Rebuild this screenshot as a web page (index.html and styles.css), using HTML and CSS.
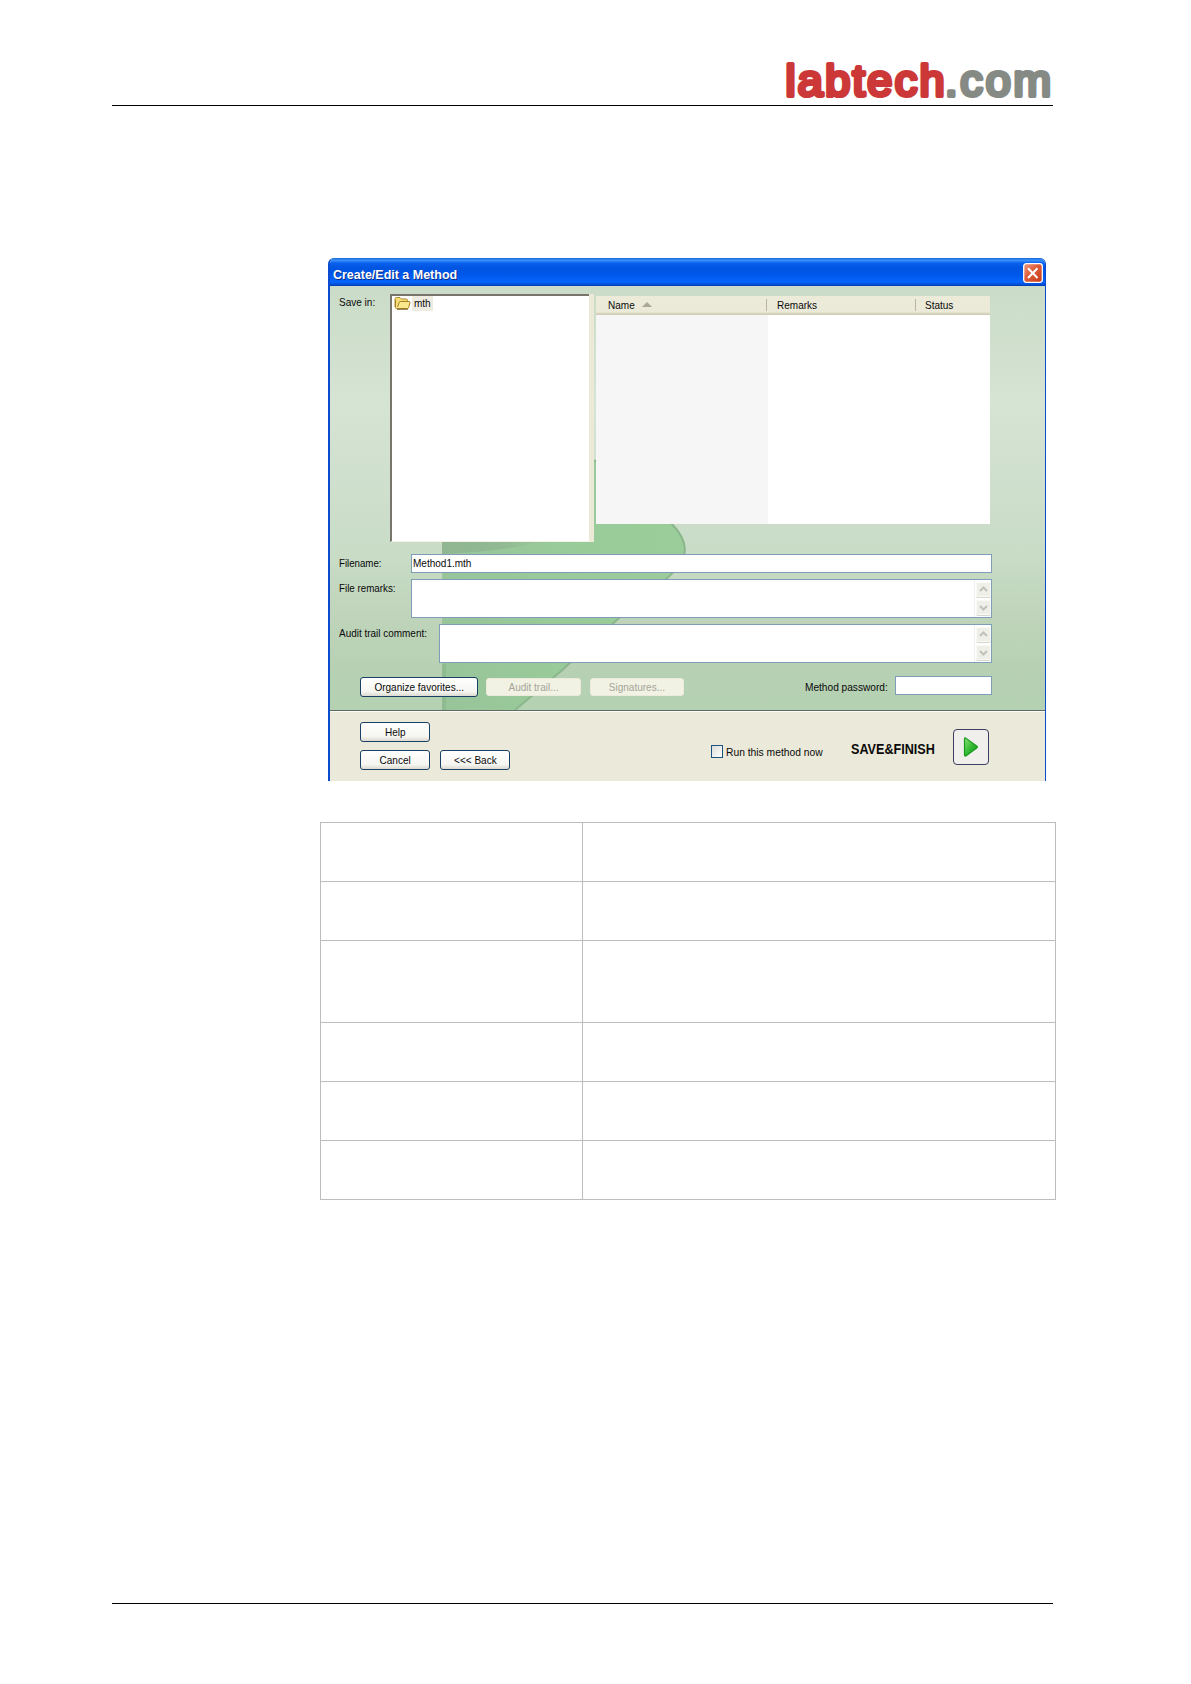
FILE: index.html
```html
<!DOCTYPE html>
<html lang="en">
<head>
<meta charset="utf-8">
<title>Create/Edit a Method</title>
<link rel="stylesheet" href="styles.css">
</head>
<body>
<div class="page">
  <header class="page-header">
    <svg class="logo" width="274" height="50" viewBox="0 0 274 50">
      <text class="logo-red" x="6.5" y="40" textLength="159" lengthAdjust="spacing">labtech</text>
      <text class="logo-gray" x="166" y="40" textLength="106" lengthAdjust="spacing">.com</text>
    </svg>
  </header>
  <main class="content">
    <section class="dialog">
      <div class="titlebar">
        <span class="title t">Create/Edit a Method</span>
        <svg class="close" width="20" height="20" viewBox="0 0 20 20">
          <defs><linearGradient id="red" x1="0" y1="0" x2="1" y2="1"><stop offset="0" stop-color="#f09a80"/><stop offset=".45" stop-color="#de5a38"/><stop offset="1" stop-color="#c43c18"/></linearGradient></defs>
          <rect x=".7" y=".7" width="18.6" height="18.6" rx="2.5" fill="url(#red)" stroke="#fff" stroke-width="1.3"/>
          <path d="M5 5.3L14.5 15M14.5 5.3L5 15" stroke="#fff" stroke-width="2"/>
        </svg>
      </div>
      <div class="body">
        <svg class="leaf" width="715" height="424" viewBox="0 0 715 424">
          <defs>
            <linearGradient id="leafFill" x1="0" y1="0" x2="1" y2="0"><stop offset="0" stop-color="#98c49a"/><stop offset=".45" stop-color="#99ca99"/><stop offset="1" stop-color="#9bcd9b"/></linearGradient>
            <linearGradient id="smudge" x1="0" y1="0" x2="1" y2="0"><stop offset="0" stop-color="#8cb08e" stop-opacity=".7"/><stop offset=".6" stop-color="#8cb08e" stop-opacity=".6"/><stop offset="1" stop-color="#8cb08e" stop-opacity="0"/></linearGradient>
          </defs>
          <path d="M112 120C200 120 240 160 264 174C310 205 332 228 342 238C361 258 359 274 335 294C315 312 300 322 289 332L230 386L185 424H112Z" fill="url(#leafFill)"/>
          <path d="M264 174C310 205 332 228 342 238C361 258 359 274 335 294C315 312 300 322 289 332L230 386L185 424" fill="none" stroke="#8ab68c" stroke-width="2"/>
          <path d="M112 256H212Q170 266 112 268Z" fill="url(#smudge)"/>
          <path d="M114 378V424" stroke="#8ebb90" stroke-width="4"/>
        </svg>
        <div class="browser">
          <span class="t lbl save-in">Save in:</span>
          <div class="tree">
            <svg width="17" height="14" viewBox="0 0 17 14">
              <path d="M1 11V3Q1 1.5 2.5 1.5H6L7.5 3H12.5Q13.5 3 13.5 4.5V6" fill="#f5dc79" stroke="#b08a2c"/>
              <path d="M1.5 4V11.5Q1.5 12.5 2.5 12.5H13.5Q14.3 12.5 14.6 11.6L16 6.5Q16 5.5 15 5.5H6.5Q5.5 5.5 5.2 6.5L3.5 11" fill="#fce88c" stroke="#a57e22"/>
              <path d="M3 13.4H14" stroke="#6f5b25" stroke-width=".8"/>
            </svg>
            <span class="node"><span class="t">mth</span></span>
          </div>
          <div class="edge"></div>
          <div class="list">
            <div class="list-head">
              <div class="col name"><span class="t">Name</span><svg width="10" height="5" viewBox="0 0 10 5"><path d="M0 5L5 0L10 5Z" fill="#aca899"/></svg></div>
              <div class="col remarks"><span class="t">Remarks</span></div>
              <div class="col status"><span class="t">Status</span></div>
            </div>
            <div class="list-body"></div>
          </div>
        </div>
        <div class="field filename"><label class="t lbl">Filename:</label><div class="input"><span class="t">Method1.mth</span></div></div>
        <div class="field area"><label class="t lbl">File remarks:</label>
          <div class="input"><div class="scroll"><svg width="15" height="15" viewBox="0 0 15 15"><path d="M4 9L7.5 5.5L11 9"/></svg><svg width="15" height="15" viewBox="0 0 15 15"><path d="M4 6L7.5 9.5L11 6"/></svg></div></div>
        </div>
        <div class="field area audit"><label class="t lbl">Audit trail comment:</label>
          <div class="input"><div class="scroll"><svg width="15" height="15" viewBox="0 0 15 15"><path d="M4 9L7.5 5.5L11 9"/></svg><svg width="15" height="15" viewBox="0 0 15 15"><path d="M4 6L7.5 9.5L11 6"/></svg></div></div>
        </div>
        <div class="actions">
          <div class="btn wide"><span class="t">Organize favorites...</span></div>
          <div class="btn off first"><span class="t">Audit trail...</span></div>
          <div class="btn off"><span class="t">Signatures...</span></div>
          <span class="t password">Method password:</span>
          <div class="input pw"></div>
        </div>
      </div>
      <div class="footer">
        <div class="nav">
          <div class="btn"><span class="t">Help</span></div>
          <div class="nav-row"><div class="btn"><span class="t">Cancel</span></div><div class="btn"><span class="t">&lt;&lt;&lt; Back</span></div></div>
        </div>
        <div class="run"><i class="check"></i><span class="t">Run this method now</span></div>
        <span class="t finish">SAVE&amp;FINISH</span>
        <div class="play">
          <svg width="16" height="20" viewBox="0 0 16 20">
            <defs><linearGradient id="green" x1="0" y1="0" x2="1" y2="1"><stop offset="0" stop-color="#8be07a"/><stop offset=".5" stop-color="#35bb35"/><stop offset="1" stop-color="#0d8f12"/></linearGradient></defs>
            <path d="M1.5 1.5Q2 .3 3.2 1.4L14 9.2Q14.8 10 14 10.8L3.2 18.8Q1.7 19.6 1.5 18Z" fill="url(#green)" stroke="#179a1c" stroke-width="1.2"/>
          </svg>
        </div>
      </div>
    </section>
    <table class="grid">
      <tr><td></td><td></td></tr>
      <tr><td></td><td></td></tr>
      <tr class="tall"><td></td><td></td></tr>
      <tr><td></td><td></td></tr>
      <tr><td></td><td></td></tr>
      <tr><td></td><td></td></tr>
    </table>
  </main>
  <footer class="page-footer"></footer>
</div>
</body>
</html>
```
FILE: styles.css
```css
* { box-sizing: border-box; }
body { margin: 0; background: #fff; font: 11px/14px "Liberation Sans", Arial, sans-serif; color: #0a0a0a; }
.page { width: 1191px; height: 1684px; display: flex; flex-direction: column; padding: 0 138px 80px 112px; }
.page-header { height: 106px; border-bottom: 1px solid #000; display: flex; justify-content: flex-end; align-items: flex-end; }
.logo { display: block; margin-bottom: -1px; overflow: visible; }
.logo text { font-family: "Liberation Sans", Arial, sans-serif; font-size: 45px; stroke-width: 4.2px; stroke-linejoin: round; stroke-linecap: round; }
.logo .logo-red { fill: #cb3837; stroke: #cb3837; }
.logo .logo-gray { fill: #868a85; stroke: #868a85; }
.content { flex: 1; padding: 152px 0 0 208px; }
.page-footer { border-top: 1px solid #000; }
.t { display: inline-block; white-space: nowrap; transform: scaleX(.91); transform-origin: left center; }

.dialog { width: 718px; height: 523px; margin-left: 8px; border-radius: 6px 6px 0 0; border: solid #0b4bd0; border-width: 0 1px 0 2px; display: flex; flex-direction: column; overflow: hidden; background: #ece9d8; }
.titlebar { height: 28px; margin: 0 -1px 0 -2px; padding: 2px 4px 0 6px; display: flex; align-items: center; justify-content: space-between; background: linear-gradient(#1565d8 0, #3b93fb 8%, #0a60ee 18%, #0054e0 35%, #0057ea 60%, #0465fc 85%, #0250d8 94%, #0038b0 100%); }
.title { color: #fff; font-size: 13px; font-weight: bold; transform: scaleX(.96); margin: 3px 0 0 -1px; text-shadow: 1px 1px 0 #0a2f8a; }
.close { display: block; margin-right: -1px; }

.body { position: relative; height: 425px; border-bottom: 1px solid #5f6b60; background: linear-gradient(#cadcc8 0, #d6e4d3 27%, #d0e0ce 45%, #c8dcc6 64%, #bfd4ba 78%, #b6d0b3 92%, #b4d2b2 100%); }
.leaf { position: absolute; left: 0; top: 0; }
.browser, .field, .actions { position: relative; }
.browser { display: flex; height: 268px; padding: 8px 0 0 9px; }
.lbl { flex: none; }
.save-in { width: 51px; margin: 1px 0 0; height: 14px; }
.tree { width: 199px; height: 248px; background: #fff; border: solid #77756c; border-width: 2px 0 0 2px; border-bottom: 1px solid #f4f3ea; padding: 0 0 0 2px; display: flex; }
.edge { width: 5px; height: 248px; background: #ece9d8; }
.node { background: #eeece2; height: 15px; width: 21px; margin-left: 1px; padding-left: 2px; line-height: 14px; }
.list { margin: 2px 0 0 2px; width: 394px; height: 228px; }
.list-head { display: flex; height: 19px; background: linear-gradient(#ecead9 0, #ebe9d8 84%, #d4d0ba 94%, #cdc9b2 100%); }
.col { height: 12px; margin-top: 3px; line-height: 12px; border-right: 1px solid #b9b5a2; }
.col.name { width: 171px; padding-left: 12px; display: flex; gap: 5px; }
.col.name svg { margin: 3px 0 0 0; }
.col.remarks { width: 149px; padding-left: 10px; }
.col.status { padding-left: 9px; border: 0; }
.list-body { height: 209px; background: linear-gradient(90deg, #f6f6f6 172px, #fff 172px); }

.field { display: flex; padding-left: 9px; }
.field .lbl { width: 72px; margin-top: 2px; height: 14px; }
.filename .lbl { transform: scaleX(.88); }
.input { width: 581px; height: 19px; background: #fff; border: 1px solid #7f9db9; }
.filename .input { padding: 1px 0 0 1px; }
.area { margin-top: 6px; }
.area .input { height: 39px; display: flex; justify-content: flex-end; }
.area .lbl { transform: scaleX(.89); }
.audit .lbl { width: 100px; transform: scaleX(.905); }
.audit .input { width: 553px; }
.scroll { width: 17px; padding: 2px 1px; display: flex; flex-direction: column; justify-content: space-between; border-left: 1px solid #f0efe9; }
.scroll svg { background: #efefe9; border-radius: 2px; box-shadow: inset 0 0 0 1px #f9f9f5, 0 1px 0 #d8d7cd; fill: none; stroke: #c2c1b8; stroke-width: 2; }

.actions { display: flex; margin-top: 13px; padding-left: 30px; }
.btn { width: 70px; height: 20px; border: 1px solid #1b4066; border-radius: 3px; background: linear-gradient(#fff, #f5f5f1 75%, #dcdad0); text-align: center; line-height: 18px; }
.btn .t { transform-origin: center; }
.btn.wide { width: 118px; margin-top: 1px; }
.btn.off { width: 94px; height: 18px; margin: 2px 0 0 9px; border-color: #eceadb; background: #f1f1e4; color: #a5a597; line-height: 16px; }
.btn.off.first { margin-left: 8px; width: 95px; }
.password { margin: 4px 0 0 121px; width: 90px; height: 14px; transform: scaleX(.92); }
.input.pw { width: 97px; }

.footer { flex: 1; border-top: 1px solid #fbfaf4; display: flex; background: #ebe9d9; }
.nav { padding: 10px 0 0 30px; width: 381px; }
.nav-row { display: flex; gap: 10px; margin-top: 8px; }
.run { display: flex; width: 140px; padding-top: 33px; }
.check { width: 12px; height: 13px; margin: 0 3px 0 0; border: 1px solid #1c5180; background: linear-gradient(135deg, #dcdcd7, #fff); }
.run .t { transform: scaleX(.935); }
.finish { width: 102px; margin: 27px 0 0 0; height: 20px; line-height: 20px; font-size: 14px; font-weight: bold; transform: scaleX(.9); }
.play { width: 36px; height: 36px; margin: 17px 0 0 0; border: 1px solid #3d3d60; border-radius: 4px; background: #f0efec; display: flex; align-items: center; justify-content: center; }

.grid { margin: 41px 0 0; width: 736px; border-collapse: collapse; table-layout: fixed; }
.grid td { border: 1px solid #bdbdbd; height: 59px; padding: 0; }
.grid td:first-child { width: 262px; }
.grid .tall td { height: 82px; }
```
